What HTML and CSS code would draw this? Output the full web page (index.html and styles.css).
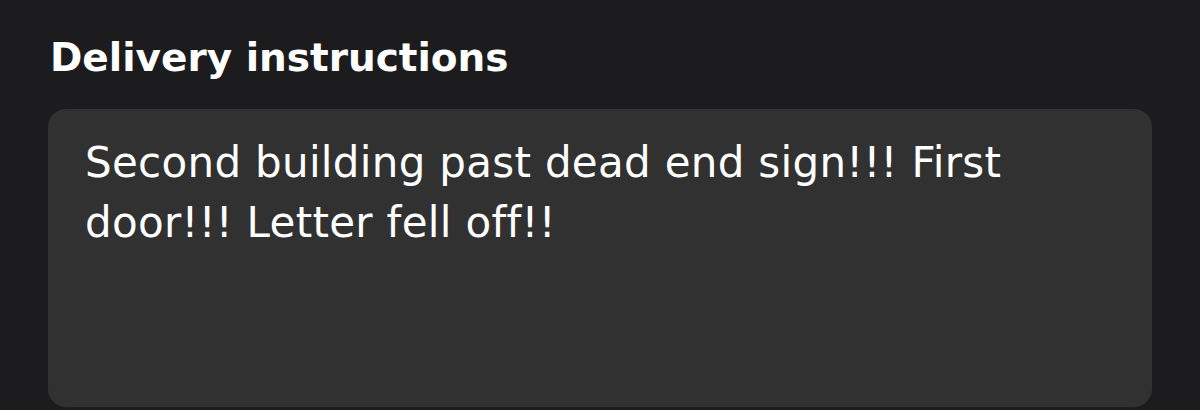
FILE: index.html
```html
<!DOCTYPE html>
<html lang="en">
<head>
<meta charset="utf-8">
<link rel="stylesheet" href="styles.css">
</head>
<body>
<section class="field">
  <h2 class="label">Delivery instructions</h2>
  <div class="box">
    <p class="text">Second building past dead end sign!!! First door!!! Letter fell off!!</p>
  </div>
</section>
</body>
</html>
```
FILE: styles.css
```css
html, body {
  margin: 0;
  padding: 0;
  background: #1c1c1e;
  width: 1200px;
  height: 410px;
  overflow: hidden;
}
.field {
  padding: 28px 48px 0 48px;
  font-family: "DejaVu Sans", sans-serif;
  color: #ffffff;
}
.label {
  margin: 0 0 0 2px;
  font-size: 39px;
  font-weight: 700;
  line-height: 60px;
}
.box {
  margin-top: 21px;
  height: 298px;
  background: #313131;
  border-radius: 18px;
  padding: 24px 110px 0 37px;
  box-sizing: border-box;
}
.text {
  margin: 0;
  font-size: 42px;
  font-weight: 400;
  line-height: 60px;
  letter-spacing: 0.3px;
}
```
